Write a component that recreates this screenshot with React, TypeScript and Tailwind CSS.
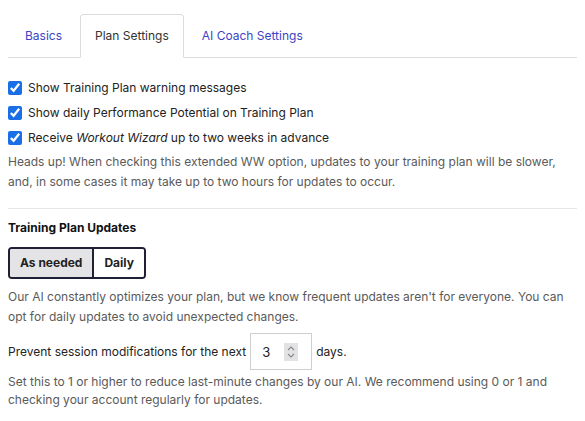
import React from "react";

export default function App() {
  return (
    <div className="bg-white w-[585px] h-[421px] overflow-hidden px-2 pt-[14px] text-[12px] leading-[20px] text-[#222]" style={{ fontFamily: "Inter, 'Noto Sans', sans-serif" }}>
      <div className="flex border-b border-[#dcdcdc] h-[44px]">
        <div className="px-4 flex items-center text-[#3b43c4] border border-transparent">Basics</div>
        <div className="px-[14px] flex items-center text-[#333] border border-[#dcdcdc] border-b-white rounded-t-[4px] bg-white mb-[-1px] ml-px">Plan Settings</div>
        <div className="px-[18px] flex items-center text-[#3b43c4]">AI Coach Settings</div>
      </div>

      <div className="mt-[20px] flex flex-col gap-[5px]">
        {[
          <>Show Training Plan warning messages</>,
          <>Show daily Performance Potential on Training Plan</>,
          <>Receive <i>Workout Wizard</i> up to two weeks in advance</>,
        ].map((t, i) => (
          <label key={i} className="flex items-center gap-[6px] h-[20px]">
            <input type="checkbox" defaultChecked className="m-0 w-[14px] h-[14px] accent-[#1a6fe6]" />
            <span>{t}</span>
          </label>
        ))}
      </div>
      <p className="mt-[4px] text-[#5a5a5a]">
        Heads up! When checking this extended WW option, updates to your training plan will be slower, and, in some cases it may take up to two hours for updates to occur.
      </p>

      <div className="mt-[16px] border-t border-[#e6e6e6]" />

      <div className="mt-[9px] font-bold text-[#111]">Training Plan Updates</div>

      <div className="mt-[9px] inline-flex border-2 border-[#1f1f36] rounded-[4px] overflow-hidden h-[32px] font-bold">
        <div className="bg-[#e4e4e7] px-[10px] flex items-center">As needed</div>
        <div className="bg-white px-[10px] flex items-center border-l-2 border-[#1f1f36]">Daily</div>
      </div>

      <p className="mt-[8px] text-[#5a5a5a]">
        Our AI constantly optimizes your plan, but we know frequent updates aren't for everyone. You can opt for daily updates to avoid unexpected changes.
      </p>

      <div className="mt-[6px] flex items-center gap-[4px]">
        <span>Prevent session modifications for the next</span>
        <div className="w-[62px] h-[37px] border border-[#cfcfcf] flex items-center pl-[11px] gap-[14px]">
          <span className="text-[13px]">3</span>
          <span className="w-[14px] h-[18px] bg-[#e2e2e4] flex flex-col items-center justify-center">
            <svg width="8" height="14" viewBox="0 0 8 14" fill="none" stroke="#888" strokeWidth="1.1">
              <path d="M1 5 L4 2 L7 5" />
              <path d="M1 9 L4 12 L7 9" />
            </svg>
          </span>
        </div>
        <span>days.</span>
      </div>

      <p className="mt-[3px] text-[#5a5a5a] leading-[18px]">
        Set this to 1 or higher to reduce last-minute changes by our AI. We recommend using 0 or 1 and checking your account regularly for updates.
      </p>
    </div>
  );
}
